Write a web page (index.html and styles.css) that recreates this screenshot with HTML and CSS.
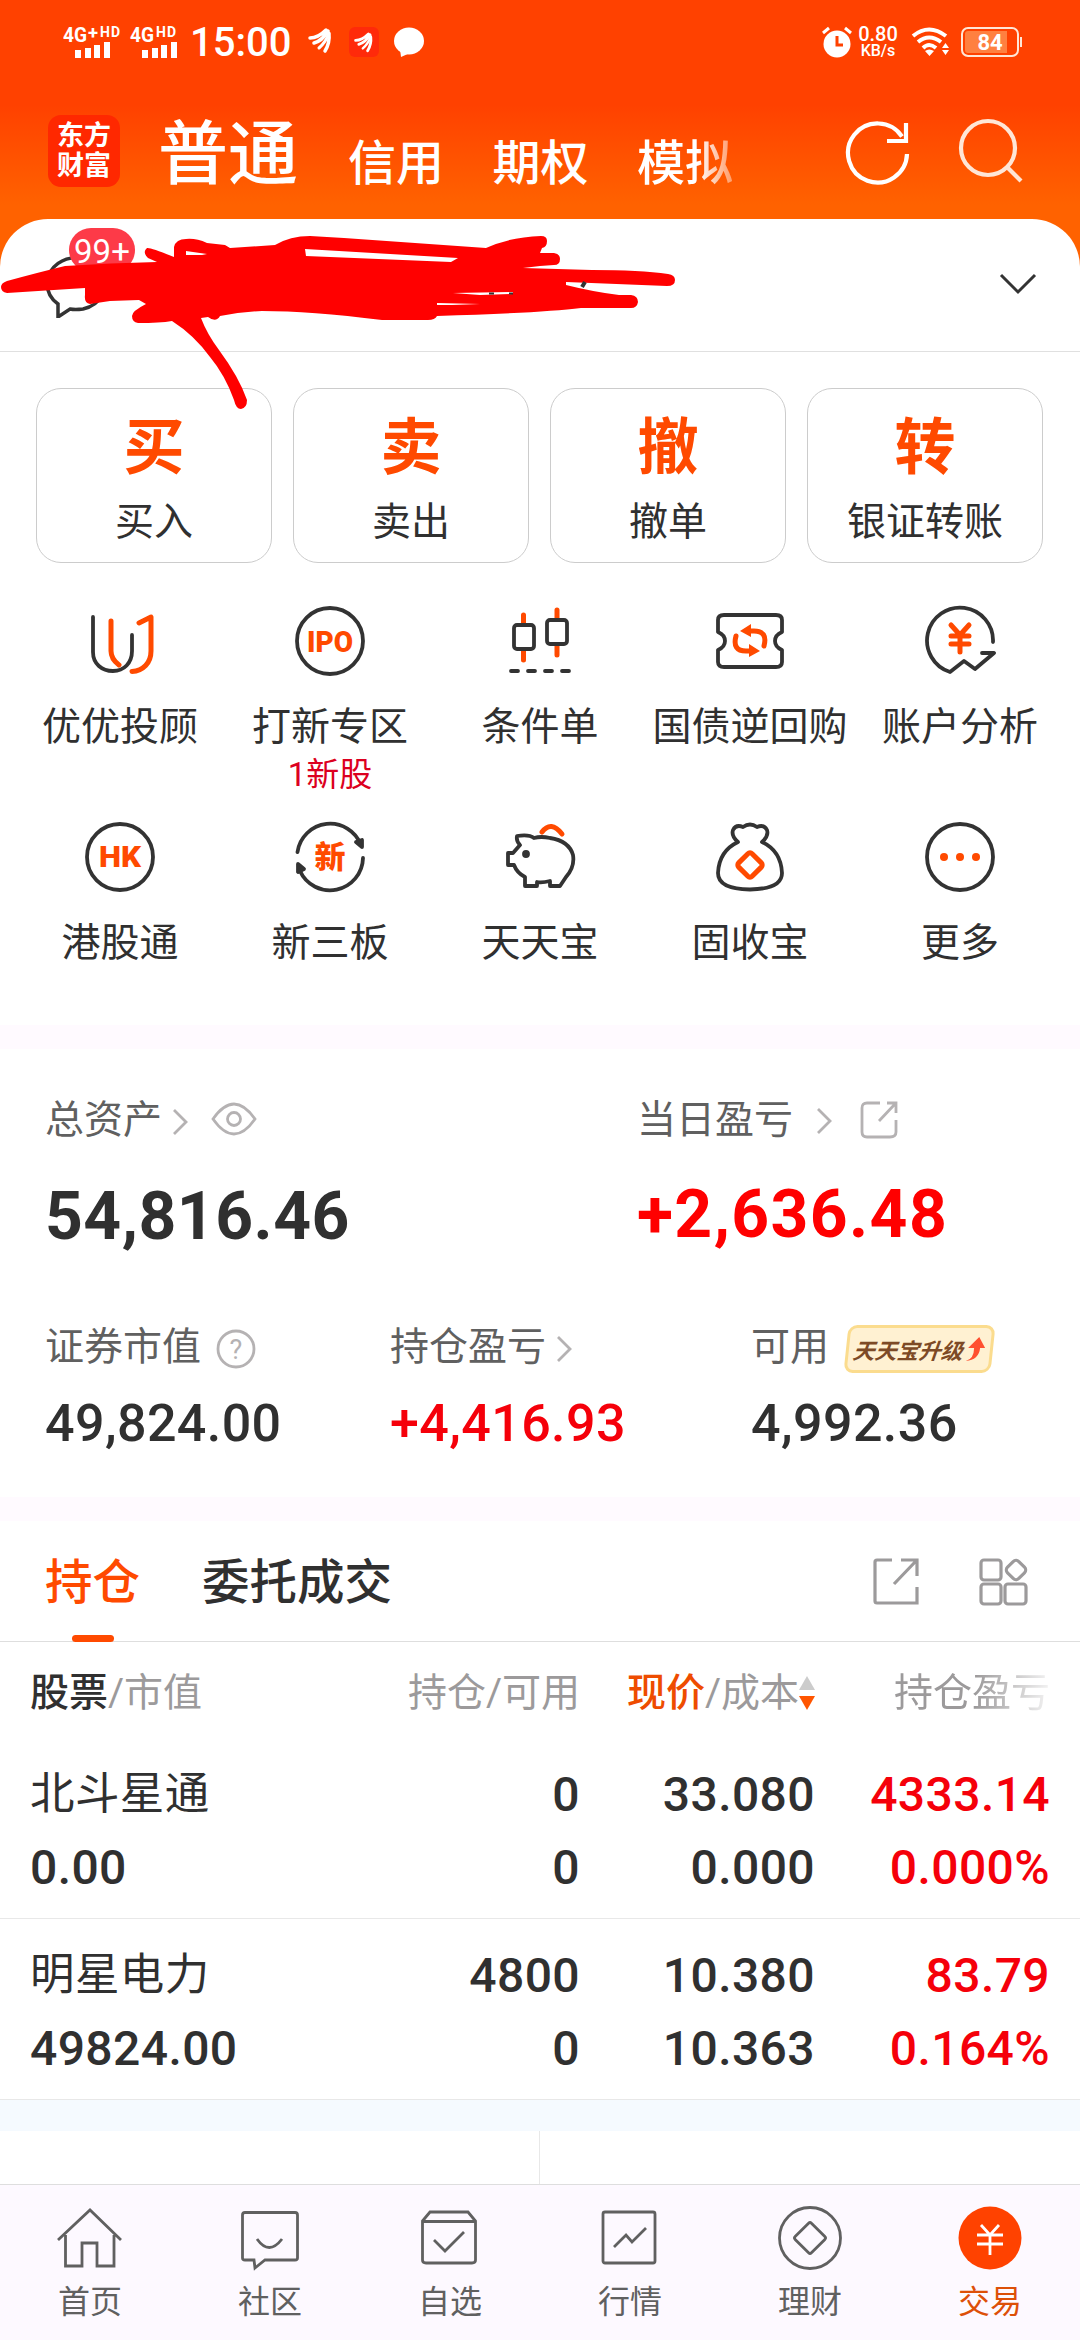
FILE: index.html
```html
<!DOCTYPE html>
<html lang="zh-CN">
<head>
    <meta charset="UTF-8">
    <meta name="viewport" content="width=device-width, initial-scale=1.0">
    <title>交易</title>
    <link rel="stylesheet" href="styles.css">
</head>
<body>
    <div class="page">
        <header class="header">
            <div class="status-bar">
                <svg class="signal" width="120" height="40" viewBox="0 -4 120 40">
                    <g fill="#fff" font-family="Roboto" font-weight="700">
                        <text x="0" y="16" font-size="20" textLength="24" lengthAdjust="spacingAndGlyphs">4G</text>
                        <text x="25" y="13" font-size="18" textLength="10" lengthAdjust="spacingAndGlyphs">+</text>
                        <text x="37" y="11" font-size="14" textLength="20">HD</text>
                        <text x="67" y="16" font-size="20" textLength="24" lengthAdjust="spacingAndGlyphs">4G</text>
                        <text x="93" y="11" font-size="14" textLength="20">HD</text>
                    </g>
                    <path stroke="#fff" stroke-width="6" d="M15 32v-8M25 32V22M34 32V19M44 32V16M82 32v-8M92 32V22M101 32V19M111 32V16"/>
                </svg>
                <span class="clock">15:00</span>
                <svg class="notices" width="120" height="34" viewBox="0 0 120 34">
                    <rect x="41" y="2" width="30" height="30" rx="6" fill="#ff2a0a"/>
                    <g id="wing" fill="none" stroke="#fff" stroke-linecap="round">
                        <path stroke-width="3.500" d="M2 13Q10 13 18 5M6 18Q14 16 20 6M17 26Q22 18 21 9"/>
                        <path stroke-width="3" d="M11 23Q18 17 21 8"/>
                    </g>
                    <use href="#wing" transform="translate(46 5) scale(.8)"/>
                    <ellipse cx="101" cy="16" rx="15" ry="13.500" fill="#fff"/>
                    <path d="M92 24l1 8 9-4z" fill="#fff"/>
                </svg>
                <div class="status-right">
                    <svg width="30" height="32" viewBox="0 0 30 32">
                        <circle cx="15" cy="18" r="13.500" fill="#fff"/>
                        <path d="M1 7l6-5M29 7l-6-5" stroke="#fff" stroke-width="3"/>
                        <path d="M15 10v9h6" fill="none" stroke="#ff4100" stroke-width="3"/>
                    </svg>
                    <div class="net-speed"><span>0.80</span><small>KB/s</small></div>
                    <svg class="wifi" width="40" height="30" viewBox="0 0 40 30">
                        <g fill="none" stroke="#fff" stroke-width="4">
                            <path d="M2 9Q18 -4 35 9"/><path d="M7 15Q18 6 30 15"/><path d="M12 21Q18 15 25 21"/>
                        </g>
                        <path d="M14 24q4-3 9 0l-4.500 5zM31 21l3.500-5 3.500 5zM31 23l3.500 5 3.500-5z" fill="#fff"/>
                    </svg>
                    <div class="battery">84</div>
                    <i class="battery-tip"></i>
                </div>
            </div>
            <nav class="brand-bar">
                <div class="logo">东方<br>财富</div>
                <span class="market market-on">普通</span>
                <span class="market">信用</span>
                <span class="market">期权</span>
                <span class="market market-fade">模拟</span>
                <svg class="refresh" width="70" height="70" viewBox="0 0 70 70" fill="none" stroke="#fff" stroke-width="4.200">
                    <path d="M64 37A29.500 29.500 0 1 1 59 19.500"/><path d="M63 6v18H44"/>
                </svg>
                <svg class="search" width="70" height="70" viewBox="0 0 70 70" fill="none" stroke="#ffe6d6" stroke-width="4.200">
                    <circle cx="31" cy="31" r="27"/><path d="M50 50l14 14"/>
                </svg>
            </nav>
        </header>

        <section class="account">
            <div class="message">
                <svg width="70" height="70" viewBox="0 0 70 70" fill="none" stroke="#333" stroke-width="3.500">
                    <path d="M13 56v13l12-8q5 1 13 0A29 26 0 1 0 13 56z"/>
                </svg>
                <span class="badge">99+</span>
            </div>
            <svg class="fold" width="40" height="24" viewBox="0 0 40 24" fill="none" stroke="#333" stroke-width="3">
                <path d="M3 2l17 17L37 2"/>
            </svg>
            <svg class="scribble" width="700" height="200" viewBox="0 225 700 200">
                <path fill="red" fill-rule="evenodd" d="M7 281Q40 272 65 266Q110 263 157 262L148 258Q142 252 147 248Q150 247 174 257V247Q176 239 186 239Q196 238 207 243L225 245L230 248L275 245Q290 236 310 236L344 238L486 248Q510 237 541 236Q547 236 547 241Q547 247 542 248L540 253H554Q560 254 560 259Q560 265 554 265L540 266L523 268L592 270Q640 270 668 274Q675 275 675 280Q675 286 667 286L566 282V285Q594 292 619 295H631Q638 296 638 302Q637 308 631 308H581Q540 313 437 316Q435 320 428 320H382Q310 311 262 311Q240 312 220 316Q216 323 208 317L201 318Q207 334 219 350Q239 377 247 400Q247 408 241 409Q236 409 234 400Q225 375 210 357Q194 335 172 321Q160 323 138 323Q132 322 132 316Q132 311 146 304L139 300L110 301L90 304Q84 303 85 295V288L7 293Q1 292 1 287Q1 283 7 281ZM186 251L207 254L202 255H186ZM305 249L458 258L451 262L306 256ZM453 293L513 292V294L480 295ZM437 303L480 304L452 305H437Z"/>
                <path d="M585 282l-3 5" stroke="#333" stroke-width="4"/>
                <path d="M489 293.500h5M509 293.500h4" stroke="#333" stroke-width="2"/>
            </svg>
        </section>

        <section class="cards">
            <div class="card"><b>买</b><span>买入</span></div>
            <div class="card"><b>卖</b><span>卖出</span></div>
            <div class="card"><b>撤</b><span>撤单</span></div>
            <div class="card"><b>转</b><span>银证转账</span></div>
        </section>

        <section class="menu">
            <div class="item">
                <svg class="icon" viewBox="0 0 72 72">
                    <path d="M9 12V47C9 59 18 66 29 66S48 58 48 46V30"/>
                    <path class="hot" d="M27 16V46Q27 54 35 60M55 18L67 12V46C67 58 59 66 48 66.500"/>
                </svg>
                <span>优优投顾</span>
            </div>
            <div class="item">
                <svg class="icon" viewBox="0 0 72 72">
                    <circle cx="36" cy="36" r="33"/>
                    <text x="36" y="47" font-size="30" textLength="46" lengthAdjust="spacingAndGlyphs">IPO</text>
                </svg>
                <span>打新专区</span>
                <em>1新股</em>
            </div>
            <div class="item">
                <svg class="icon" viewBox="0 0 72 72">
                    <path class="hot" d="M19.500 10v9M19.500 46v9M53 5v9M53 41v9"/>
                    <rect x="10" y="20" width="20" height="24" rx="3"/><rect x="43" y="15" width="20" height="24" rx="3"/>
                    <path d="M7 66h7M24 66h7M41 66h7M58 66h7"/>
                </svg>
                <span>条件单</span>
            </div>
            <div class="item">
                <svg class="icon" viewBox="0 0 72 72">
                    <path d="M10 10H62Q68 10 68 15V27Q61 30 61 36T68 45V57Q68 62 62 62H10Q4 62 4 57V45Q11 42 11 36T4 27V15Q4 10 10 10Z"/>
                    <path class="hot" d="M22 31Q18 46 32 46H38M50 41Q54 26 40 26H34"/>
                    <path class="solid" d="M26 26l11-7v13zM46 46l-11-7v13z"/>
                </svg>
                <span>国债逆回购</span>
            </div>
            <div class="item">
                <svg class="icon" viewBox="0 0 72 72">
                    <path d="M69 37A33 33 0 1 0 26 67L40 56L51 64L70 48H58"/>
                    <path class="hot" d="M27 20l9 10 9-10M27 31h18M27 39h18M36 31v16"/>
                </svg>
                <span>账户分析</span>
            </div>
            <div class="item">
                <svg class="icon" viewBox="0 0 72 72">
                    <circle cx="36" cy="36" r="33"/>
                    <text x="36" y="46" font-size="29" textLength="42" lengthAdjust="spacingAndGlyphs">HK</text>
                </svg>
                <span>港股通</span>
            </div>
            <div class="item">
                <svg class="icon" viewBox="0 0 72 72">
                    <path d="M3.500 31A33 33 0 0 1 67 24M69 37A33 33 0 0 1 6 50"/>
                    <path class="dark" d="M62 21l6-2v7zM4 43l6 5-6 3z"/>
                    <text x="36" y="47" font-size="31">新</text>
                </svg>
                <span>新三板</span>
            </div>
            <div class="item">
                <svg class="icon" viewBox="0 0 72 72">
                    <path d="M13 15Q25 13 30 17Q37 15 46 17Q65 20 69 34Q71 46 62 56L56 65H46V60Q38 62 33 61V65H21V56Q13 52 10 44H4V32H9L16 24Q12 20 13 15Z"/>
                    <path class="hot" d="M38 11Q47 -1 58 13"/>
                    <circle class="dark" cx="22" cy="33" r="2"/>
                </svg>
                <span>天天宝</span>
            </div>
            <div class="item">
                <svg class="icon" viewBox="0 0 72 72">
                    <path d="M24 21Q17 15 19 9Q22 3 29 6Q36 1 43 6Q50 3 53 9Q55 15 48 21Q67 30 68 52Q68 68 36 68.500Q4 68 4 52Q5 30 24 21Z"/>
                    <rect class="hot" x="26.500" y="34.500" width="19" height="19" rx="3" transform="rotate(45 36 44)"/>
                </svg>
                <span>固收宝</span>
            </div>
            <div class="item">
                <svg class="icon" viewBox="0 0 72 72">
                    <circle cx="36" cy="36" r="33"/>
                    <g class="solid"><circle cx="20" cy="36" r="4"/><circle cx="36" cy="36" r="4"/><circle cx="52" cy="36" r="4"/></g>
                </svg>
                <span>更多</span>
            </div>
        </section>

        <section class="assets">
            <div class="asset-row asset-main">
                <div>
                    <p class="label"><span>总资产</span>
                        <svg class="arrow" width="17" height="28" viewBox="0 0 17 28"><path d="M2 2l12 12L2 26"/></svg>
                        <svg class="eye" width="46" height="34" viewBox="0 0 46 34"><path d="M2 17Q23 -13 44 17Q23 47 2 17Z"/><circle cx="23" cy="17" r="6.500"/></svg>
                    </p>
                    <p class="total">54,816.46</p>
                </div>
                <div>
                    <p class="label"><span>当日盈亏</span>
                        <svg class="arrow arrow-wide" width="17" height="28" viewBox="0 0 17 28"><path d="M2 2l12 12L2 26"/></svg>
                        <svg class="share" width="40" height="40" viewBox="0 0 40 40"><path d="M21 3H8Q3 3 3 8V32Q3 37 8 37H31Q37 37 37 32V20M28 3H37V13M36 4L20 21"/></svg>
                    </p>
                    <p class="total total-day red">+2,636.48</p>
                </div>
            </div>
            <div class="asset-row asset-sub">
                <div>
                    <p class="label"><span>证券市值</span>
                        <svg class="help" width="40" height="40" viewBox="0 0 40 40"><circle cx="20" cy="20" r="18"/><text x="20" y="30" font-size="27">?</text></svg>
                    </p>
                    <p class="amount">49,824.00</p>
                </div>
                <div>
                    <p class="label"><span>持仓盈亏</span>
                        <svg class="arrow" width="17" height="28" viewBox="0 0 17 28"><path d="M2 2l12 12L2 26"/></svg>
                    </p>
                    <p class="amount red">+4,416.93</p>
                </div>
                <div>
                    <p class="label"><span>可用</span>
                        <b class="upgrade"><i>天天宝升级</i>
                            <svg width="20" height="26" viewBox="0 0 20 26"><path d="M1 25Q9 23 8 12H2L12 1L19 12H14Q14 24 1 25Z" fill="#ff5030"/></svg>
                        </b>
                    </p>
                    <p class="amount">4,992.36</p>
                </div>
            </div>
        </section>

        <section class="holdings">
            <div class="tabs">
                <span class="tab tab-on">持仓</span>
                <span class="tab">委托成交</span>
                <svg class="tab-share" width="48" height="48" viewBox="0 0 48 48"><path d="M19 2H4Q2 2 2 4V43Q2 45 4 45H44V29M28 2H44V18M43 3L21 26"/></svg>
                <svg class="tab-grid" width="50" height="50" viewBox="0 0 50 50"><rect x="2" y="2" width="20" height="20" rx="3"/><rect x="2" y="26" width="20" height="20" rx="3"/><rect x="26" y="26" width="21" height="20" rx="3"/><rect x="29" y="4" width="16" height="16" rx="4" transform="rotate(45 37 12)"/></svg>
            </div>
            <div class="row head">
                <span><b class="dark-text">股票</b>/市值</span>
                <span class="head-pos">持仓/可用</span>
                <span class="head-price"><b>现价</b>/成本<svg width="16" height="36" viewBox="0 0 16 36"><path d="M0 15L8 1l8 14z" fill="#ccc"/><path d="M0 21l8 14 8-14z" fill="#ff5500"/></svg></span>
                <span class="head-last">持仓盈亏</span>
            </div>
            <div class="row stock">
                <span class="name">北斗星通</span><span>0</span><span>33.080</span><span class="red">4333.14</span>
                <span>0.00</span><span>0</span><span>0.000</span><span class="red">0.000%</span>
            </div>
            <div class="row stock">
                <span class="name">明星电力</span><span>4800</span><span>10.380</span><span class="red">83.79</span>
                <span>49824.00</span><span>0</span><span>10.363</span><span class="red">0.164%</span>
            </div>
        </section>

        <div class="more"><div></div><div></div></div>

        <nav class="tabbar">
            <a>
                <svg viewBox="0 0 72 72"><path d="M4 38L36 8L67 38M11.500 33V64H28V41H43V64H60V33"/></svg>
                首页
            </a>
            <a>
                <svg viewBox="0 0 72 72"><path d="M11 10.500H61Q63.500 10.500 63.500 13V56Q63.500 58 61 58H31L21 66L20 58H11Q8.500 58 8.500 56V13Q8.500 10.500 11 10.500ZM23 37Q35 54 48 37"/></svg>
                社区
            </a>
            <a>
                <svg viewBox="0 0 72 72"><path d="M8.500 19L16 10H54L61.500 19V58Q61.500 61 58 61H12Q8.500 61 8.500 58ZM8.500 19.500H61.500M20 38L31 49L50 30"/></svg>
                自选
            </a>
            <a>
                <svg viewBox="0 0 72 72"><rect x="9" y="10" width="52" height="51" rx="2"/><path d="M20 45L32 33L38 40L52 26"/></svg>
                行情
            </a>
            <a>
                <svg viewBox="0 0 72 72"><circle cx="36" cy="36" r="30.500"/><rect x="24.500" y="24.500" width="23" height="23" rx="2" transform="rotate(45 36 36)"/></svg>
                理财
            </a>
            <a class="current">
                <svg viewBox="0 0 72 72"><circle cx="36" cy="36" r="31.500"/><path d="M27 23l9 10 9-10M23 33h26M23 42h26M36 33v20"/></svg>
                交易
            </a>
        </nav>
    </div>
</body>
</html>
```
FILE: styles.css
```css
* {
    box-sizing: border-box;
}
body {
    margin: 0;
    background: #fff;
    color: #303030;
    font-family: Roboto, "Noto Sans CJK SC", sans-serif;
}
p {
    margin: 0;
}
svg {
    flex: none;
    display: block;
}
.page {
    width: 1080px;
    height: 2340px;
    overflow: hidden;
    display: flex;
    flex-direction: column;
}
.red {
    color: #f5000a;
}

/* 顶部 */
.header {
    height: 275px;
    flex: none;
    color: #fff;
    background: linear-gradient(#ff4100 105px, #ff6200 205px);
}
.status-bar {
    height: 84px;
    display: flex;
    align-items: center;
    padding: 0 58px 0 63px;
}
.clock {
    width: 116px;
    padding-left: 7px;
    font-size: 40px;
    font-weight: 500;
}
.notices {
    margin-left: 9px;
}
.status-right {
    margin-left: auto;
    display: flex;
    align-items: center;
}
.net-speed {
    display: flex;
    flex-direction: column;
    gap: 1px;
    width: 42px;
    margin: 0 12px 0 5px;
    font-size: 20px;
    font-weight: 500;
    line-height: 16px;
    text-align: center;
}
.net-speed small {
    font-size: 16px;
    line-height: 15px;
}
.battery {
    width: 58px;
    height: 30px;
    margin-left: 10px;
    border: 2px solid #ffe6d6;
    border-radius: 7px;
    box-shadow: inset 0 0 0 2px #ff4100;
    background: linear-gradient(90deg, #ff8040 44px, transparent 44px);
    font-size: 22px;
    font-weight: 700;
    line-height: 27px;
    text-align: center;
}
.battery-tip {
    width: 2px;
    height: 10px;
    margin-left: 1px;
    background: #ffe6d6;
}
.brand-bar {
    height: 135px;
    display: flex;
    padding-left: 48px;
}
.logo {
    width: 72px;
    height: 72px;
    margin: 31px 38px 0 0;
    padding-top: 6px;
    border-radius: 13px;
    background: #ff2800;
    font-size: 27px;
    font-weight: 700;
    line-height: 30px;
    text-align: center;
}
.market {
    width: 144.500px;
    padding-top: 50px;
    font-size: 48px;
    font-weight: 500;
    line-height: 60px;
}
.market-on {
    width: 190px;
    padding-top: 31px;
    font-size: 70px;
    line-height: 80px;
}
.market-fade {
    width: 98px;
    -webkit-mask-image: linear-gradient(90deg, #000 60px, rgba(0, 0, 0, .4) 96px);
}
.refresh {
    margin: 33px 0 0 108px;
}
.search {
    margin: 33px 0 0 44px;
}

/* 账户 */
.account {
    position: relative;
    flex: none;
    height: 133px;
    margin-top: -56px;
    border-bottom: 1px solid #e0e0e0;
    border-radius: 48px 48px 0 0;
    background: #fff;
    display: flex;
    justify-content: space-between;
}
.message {
    position: relative;
    margin: 29px 0 0 45px;
}
.badge {
    position: absolute;
    left: 24px;
    top: -20px;
    width: 66px;
    height: 44px;
    border-radius: 22px;
    background: #fd3a48;
    color: #fff;
    font-size: 33px;
    line-height: 48px;
    text-align: center;
}
.fold {
    margin: 54px 42px 0 0;
}
.scribble {
    position: absolute;
    left: 0;
    top: 6px;
    z-index: 2;
}

/* 买卖按钮 */
.cards {
    display: grid;
    grid-template-columns: repeat(4, 236px);
    gap: 21px;
    padding: 36px 36px 0;
}
.card {
    height: 175px;
    border: 1px solid #ccc;
    border-radius: 25px;
    text-align: center;
    display: flex;
    flex-direction: column;
}
.card b {
    height: 96px;
    padding-top: 23px;
    color: #ff4a00;
    font-size: 61px;
    line-height: 72px;
}
.card span {
    font-size: 39px;
    line-height: 74px;
}

/* 功能入口 */
.menu {
    display: grid;
    grid-template-columns: repeat(5, 210px);
    grid-template-rows: 216px 204px;
    padding: 42px 15px 0;
}
.item {
    display: flex;
    flex-direction: column;
    align-items: center;
    font-size: 39px;
}
.item span {
    margin-top: 20px;
    line-height: 60px;
    white-space: nowrap;
}
.item em {
    color: #dc0020;
    font-size: 33px;
    font-style: normal;
    line-height: 36px;
}
.icon {
    width: 72px;
    height: 72px;
    fill: none;
    stroke: #333;
    stroke-width: 3.800;
    stroke-linecap: round;
    stroke-linejoin: round;
}
.icon .hot {
    stroke: #ff4a00;
    stroke-width: 5;
}
.icon .solid {
    fill: #ff4a00;
    stroke: none;
}
.icon .dark {
    fill: #333;
}
.icon text {
    fill: #ff4a00;
    stroke: none;
    font-weight: 900;
    text-anchor: middle;
}

/* 资产 */
.assets {
    height: 496px;
    flex: none;
    border-top: 24px solid #fffaff;
    border-bottom: 24px solid #fffaff;
    padding: 41px 0 0 45px;
}
.asset-row {
    display: grid;
}
.asset-main {
    grid-template-columns: 592px 1fr;
    height: 227px;
}
.asset-sub {
    grid-template-columns: 345px 361px 1fr;
}
.label {
    display: flex;
    align-items: center;
    height: 64px;
    color: #606060;
    font-size: 39px;
}
.label span {
    line-height: 58px;
    padding-bottom: 4px;
}
.label svg {
    fill: none;
    stroke: #b5b2b3;
    stroke-width: 2.800;
}
.arrow {
    margin-left: 10px;
}
.label .arrow-wide {
    margin: -3px 0 0 23px;
}
.eye {
    margin: -6px 0 0 22px;
}
.share {
    margin: -4px 0 0 26px;
}
.help {
    margin-left: 15px;
}
.help text {
    fill: #b5b2b3;
    stroke: none;
    text-anchor: middle;
}
.total {
    margin-top: 23px;
    font-size: 66px;
    font-weight: 700;
    line-height: 80px;
    letter-spacing: .5px;
}
.total-day {
    margin-top: 21px;
    color: #ff0000;
    letter-spacing: 1.400px;
}
.amount {
    margin-top: 2px;
    font-size: 52px;
    font-weight: 500;
    line-height: 81px;
    letter-spacing: .4px;
}
.upgrade {
    display: flex;
    align-items: center;
    justify-content: center;
    gap: 3px;
    width: 147px;
    height: 48px;
    margin-left: 17px;
    border: 3px solid #fbdc8e;
    border-radius: 9px;
    background: #fff1d2;
    color: #7d4a26;
    font-size: 22px;
    font-weight: 700;
    transform: skewX(-6deg);
}
.label .upgrade svg {
    stroke: none;
}

/* 持仓 */
.tabs {
    height: 121px;
    border-bottom: 1px solid #dedede;
    display: flex;
    padding: 0 51px 0 45px;
}
.tab {
    margin-right: 62px;
    font-size: 47.500px;
    font-weight: 500;
    line-height: 124px;
}
.tab-on {
    display: flex;
    flex-direction: column;
    height: 120px;
    color: #ff4a00;
}
.tab-on::after {
    content: "";
    flex: none;
    width: 42px;
    height: 7px;
    margin: -10px auto 0;
    border-radius: 4px;
    background: #ff4a00;
}
.tabs svg {
    margin-top: 37px;
    fill: none;
    stroke: #9c9a9b;
    stroke-width: 3.200;
}
.tabs .tab-share {
    margin-left: auto;
}
.tabs .tab-grid {
    margin-left: 58px;
}
.row {
    display: grid;
    grid-template-columns: 300px 250px 235px 235px;
    padding-left: 30px;
    text-align: right;
}
.head {
    height: 100px;
    color: #9c9a9b;
    font-size: 39px;
    line-height: 102px;
}
.head b {
    font-weight: 500;
    color: #ee4c00;
}
.head .dark-text {
    color: #303030;
}
.row span:nth-child(4n + 1) {
    text-align: left;
}
.head-price {
    display: flex;
    align-items: center;
    justify-content: flex-end;
}
.head-last {
    white-space: nowrap;
    -webkit-mask-image: linear-gradient(90deg, #000 160px, transparent 245px);
}
.stock {
    height: 177px;
    padding-top: 16px;
    border-bottom: 1px solid #e8e8e8;
    grid-template-rows: 73px 73px;
    font-size: 48px;
    font-weight: 500;
    line-height: 73px;
    letter-spacing: .4px;
}
.stock + .stock {
    height: 181px;
    padding-top: 20px;
}
.stock .name {
    font-size: 44.500px;
    font-weight: 400;
}

/* 底部 */
.more {
    flex: none;
    height: 84px;
    border-top: 31px solid #f5faff;
    display: grid;
    grid-template-columns: 1fr 1fr;
}
.more div:first-child {
    border-right: 1px solid #e8e8e8;
}
.tabbar {
    flex: 1;
    border-top: 1px solid #dedede;
    background: #fdf9ff;
    display: grid;
    grid-template-columns: repeat(6, 1fr);
}
.tabbar a {
    display: flex;
    flex-direction: column;
    align-items: center;
    padding-top: 17px;
    color: #606060;
    font-size: 32px;
    line-height: 56px;
}
.tabbar svg {
    width: 72px;
    height: 72px;
    fill: none;
    stroke: #606060;
    stroke-width: 2.800;
}
.tabbar .current {
    color: #dd5008;
}
.current circle {
    fill: #ff4200;
    stroke: none;
}
.current path {
    stroke: #fff;
}
```
